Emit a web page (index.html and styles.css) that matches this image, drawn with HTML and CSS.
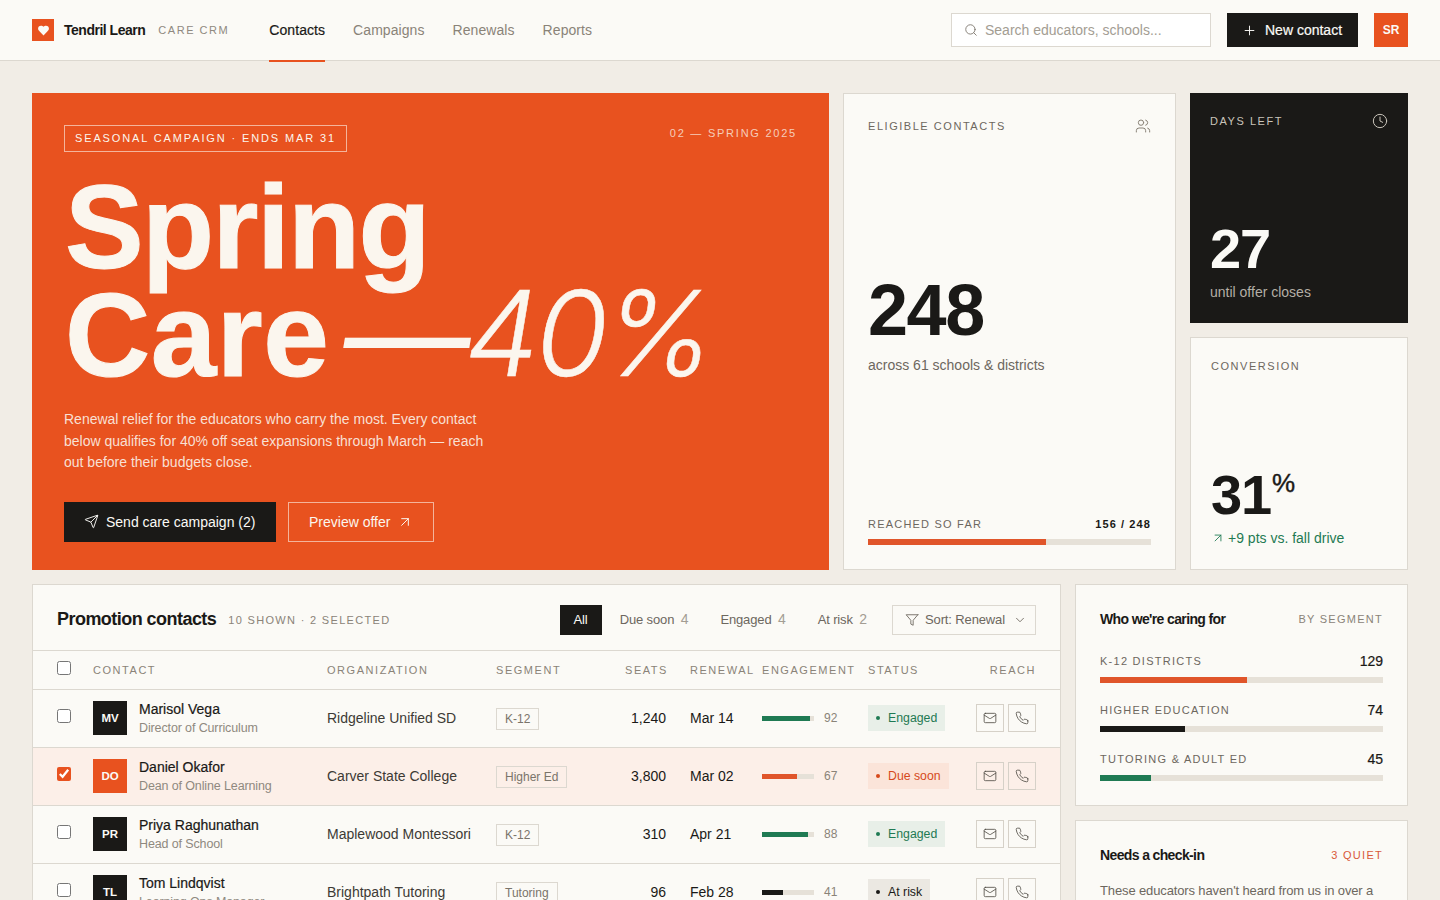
FILE: index.html
```html
<!DOCTYPE html>
<html lang="en">
<head>
  <meta charset="UTF-8" />
  <meta name="viewport" content="width=device-width, initial-scale=1.0"/>
  <title>Tendril Learn - Care CRM</title>
  <link rel="stylesheet" href="styles.css">
</head>
<body>

  <!-- Icon sprite -->
  <svg class="sprite" xmlns="http://www.w3.org/2000/svg">
    <symbol id="i-search" viewBox="0 0 24 24"><circle cx="11" cy="11" r="8"/><path d="m21 21-4.3-4.3"/></symbol>
    <symbol id="i-plus" viewBox="0 0 24 24"><path d="M5 12h14M12 5v14"/></symbol>
    <symbol id="i-send" viewBox="0 0 24 24"><path d="M14.536 21.686a.5.5 0 0 0 .937-.024l6.5-19a.496.496 0 0 0-.635-.635l-19 6.5a.5.5 0 0 0-.024.937l7.93 3.18a2 2 0 0 1 1.112 1.11z"/><path d="m21.854 2.147-10.94 10.939"/></symbol>
    <symbol id="i-arrow" viewBox="0 0 24 24"><path d="M7 7h10v10M7 17 17 7"/></symbol>
    <symbol id="i-users" viewBox="0 0 24 24"><path d="M16 21v-2a4 4 0 0 0-4-4H6a4 4 0 0 0-4 4v2"/><circle cx="9" cy="7" r="4"/><path d="M22 21v-2a4 4 0 0 0-3-3.87"/><path d="M16 3.13a4 4 0 0 1 0 7.75"/></symbol>
    <symbol id="i-clock" viewBox="0 0 24 24"><circle cx="12" cy="12" r="10"/><path d="M12 6v6l4 2"/></symbol>
    <symbol id="i-filter" viewBox="0 0 24 24"><polygon points="22 3 2 3 10 12.46 10 19 14 21 14 12.46 22 3"/></symbol>
    <symbol id="i-chevron" viewBox="0 0 24 24"><path d="m6 9 6 6 6-6"/></symbol>
    <symbol id="i-mail" viewBox="0 0 24 24"><rect x="2" y="4" width="20" height="16" rx="2"/><path d="m22 7-8.97 5.7a1.94 1.94 0 0 1-2.06 0L2 7"/></symbol>
    <symbol id="i-phone" viewBox="0 0 24 24"><path d="M22 16.92v3a2 2 0 0 1-2.18 2 19.79 19.79 0 0 1-8.63-3.07 19.5 19.5 0 0 1-6-6 19.79 19.79 0 0 1-3.07-8.67A2 2 0 0 1 4.11 2h3a2 2 0 0 1 2 1.72 12.84 12.84 0 0 0 .7 2.81 2 2 0 0 1-.45 2.11L8.09 9.91a16 16 0 0 0 6 6l1.27-1.27a2 2 0 0 1 2.11-.45 12.84 12.84 0 0 0 2.81.7A2 2 0 0 1 22 16.92z"/></symbol>
  </svg>

  <!-- Top bar -->
  <header class="topbar">
    <div class="brand">
      <span class="brand-mark">
        <svg viewBox="0 0 24 24"><path d="M19 14c1.49-1.46 3-3.21 3-5.5A5.5 5.5 0 0 0 16.5 3c-1.76 0-3 .5-4.5 2-1.5-1.5-2.74-2-4.5-2A5.5 5.5 0 0 0 2 8.5c0 2.3 1.5 4.05 3 5.5l7 7Z"/></svg>
      </span>
      <span class="brand-name">Tendril Learn</span>
      <span class="brand-tag">Care CRM</span>
    </div>
    <nav class="nav">
      <a class="nav-link active">Contacts</a>
      <a class="nav-link">Campaigns</a>
      <a class="nav-link">Renewals</a>
      <a class="nav-link">Reports</a>
    </nav>
    <div class="top-actions">
      <label class="search">
        <svg class="icon"><use href="#i-search"/></svg>
        <input type="text" placeholder="Search educators, schools...">
      </label>
      <button class="btn btn-dark btn-new"><svg class="icon"><use href="#i-plus"/></svg>New contact</button>
      <span class="user">SR</span>
    </div>
  </header>

  <main class="main">
    <section class="top-grid">

      <!-- Hero -->
      <div class="hero">
        <div class="hero-top">
          <span class="hero-badge">Seasonal campaign · Ends Mar 31</span>
          <span class="hero-issue">02 — Spring 2025</span>
        </div>
        <h1 class="hero-title">Spring<br><span class="care">Care</span><em><span class="dash">—</span>40%</em></h1>
        <p class="hero-copy">Renewal relief for the educators who carry the most. Every contact below qualifies for 40% off seat expansions through March — reach out before their budgets close.</p>
        <div class="hero-actions">
          <button class="btn btn-dark btn-send"><svg class="icon"><use href="#i-send"/></svg>Send care campaign (2)</button>
          <button class="btn btn-line">Preview offer<svg class="icon"><use href="#i-arrow"/></svg></button>
        </div>
      </div>

      <!-- Eligible -->
      <div class="card stat-main">
        <div class="stat-head">
          <span class="label">Eligible contacts</span>
          <svg class="icon"><use href="#i-users"/></svg>
        </div>
        <div class="stat-body">
          <div class="big-num">248</div>
          <div class="stat-sub">across 61 schools &amp; districts</div>
        </div>
        <div>
          <div class="reach-row">
            <span class="label">Reached so far</span>
            <span class="reach-count">156 / 248</span>
          </div>
          <div class="bar"><div class="fill fill-orange" style="width: 63%"></div></div>
        </div>
      </div>

      <div class="stat-col">
        <div class="card-dark stat-small">
          <div class="stat-head">
            <span class="label">Days left</span>
            <svg class="icon"><use href="#i-clock"/></svg>
          </div>
          <div>
            <div class="mid-num">27</div>
            <div class="stat-sub">until offer closes</div>
          </div>
        </div>
        <div class="card stat-small">
          <div class="stat-head">
            <span class="label">Conversion</span>
          </div>
          <div>
            <div class="mid-num">31<sup>%</sup></div>
            <div class="stat-up"><svg class="icon"><use href="#i-arrow"/></svg>+9 pts vs. fall drive</div>
          </div>
        </div>
      </div>
    </section>

    <section class="bottom-grid">

      <!-- Contacts table -->
      <div class="card table-card">
        <div class="table-head">
          <h2>Promotion contacts</h2>
          <span class="label table-count">10 shown · 2 selected</span>
          <div class="filters">
            <button class="filter active">All</button>
            <button class="filter">Due soon <i>4</i></button>
            <button class="filter">Engaged <i>4</i></button>
            <button class="filter">At risk <i>2</i></button>
          </div>
          <button class="sort"><svg class="icon"><use href="#i-filter"/></svg>Sort: Renewal<svg class="icon chev"><use href="#i-chevron"/></svg></button>
        </div>

        <table class="contacts">
          <colgroup>
            <col class="c-check"><col class="c-contact"><col class="c-org"><col class="c-seg"><col class="c-seats"><col class="c-renew"><col class="c-eng"><col class="c-status"><col class="c-reach">
          </colgroup>
          <thead>
            <tr>
              <th><input type="checkbox"></th>
              <th>Contact</th>
              <th>Organization</th>
              <th>Segment</th>
              <th class="right">Seats</th>
              <th>Renewal</th>
              <th>Engagement</th>
              <th>Status</th>
              <th class="right">Reach</th>
            </tr>
          </thead>
          <tbody>
            <tr>
              <td><input type="checkbox"></td>
              <td><div class="person"><span class="avatar">MV</span><div><div class="name">Marisol Vega</div><div class="role">Director of Curriculum</div></div></div></td>
              <td class="org">Ridgeline Unified SD</td>
              <td><span class="chip">K-12</span></td>
              <td class="num">1,240</td>
              <td class="date">Mar 14</td>
              <td><div class="eng"><div class="eng-bar"><div class="fill fill-green" style="width: 92%"></div></div><span>92</span></div></td>
              <td><span class="status engaged">Engaged</span></td>
              <td><div class="reach"><button><svg class="icon"><use href="#i-mail"/></svg></button><button><svg class="icon"><use href="#i-phone"/></svg></button></div></td>
            </tr>
            <tr class="selected">
              <td><input type="checkbox" checked></td>
              <td><div class="person"><span class="avatar orange">DO</span><div><div class="name">Daniel Okafor</div><div class="role">Dean of Online Learning</div></div></div></td>
              <td class="org">Carver State College</td>
              <td><span class="chip">Higher Ed</span></td>
              <td class="num">3,800</td>
              <td class="date">Mar 02</td>
              <td><div class="eng"><div class="eng-bar"><div class="fill fill-orange" style="width: 67%"></div></div><span>67</span></div></td>
              <td><span class="status due">Due soon</span></td>
              <td><div class="reach"><button><svg class="icon"><use href="#i-mail"/></svg></button><button><svg class="icon"><use href="#i-phone"/></svg></button></div></td>
            </tr>
            <tr>
              <td><input type="checkbox"></td>
              <td><div class="person"><span class="avatar">PR</span><div><div class="name">Priya Raghunathan</div><div class="role">Head of School</div></div></div></td>
              <td class="org">Maplewood Montessori</td>
              <td><span class="chip">K-12</span></td>
              <td class="num">310</td>
              <td class="date">Apr 21</td>
              <td><div class="eng"><div class="eng-bar"><div class="fill fill-green" style="width: 88%"></div></div><span>88</span></div></td>
              <td><span class="status engaged">Engaged</span></td>
              <td><div class="reach"><button><svg class="icon"><use href="#i-mail"/></svg></button><button><svg class="icon"><use href="#i-phone"/></svg></button></div></td>
            </tr>
            <tr>
              <td><input type="checkbox"></td>
              <td><div class="person"><span class="avatar">TL</span><div><div class="name">Tom Lindqvist</div><div class="role">Learning Ops Manager</div></div></div></td>
              <td class="org">Brightpath Tutoring</td>
              <td><span class="chip">Tutoring</span></td>
              <td class="num">96</td>
              <td class="date">Feb 28</td>
              <td><div class="eng"><div class="eng-bar"><div class="fill fill-black" style="width: 41%"></div></div><span>41</span></div></td>
              <td><span class="status risk">At risk</span></td>
              <td><div class="reach"><button><svg class="icon"><use href="#i-mail"/></svg></button><button><svg class="icon"><use href="#i-phone"/></svg></button></div></td>
            </tr>
          </tbody>
        </table>
      </div>

      <!-- Sidebar -->
      <aside class="side">
        <div class="card side-card">
          <div class="side-head">
            <h3>Who we're caring for</h3>
            <span class="label">By segment</span>
          </div>
          <div class="seg">
            <div class="seg-row"><span class="label">K-12 districts</span><b>129</b></div>
            <div class="bar"><div class="fill fill-orange" style="width: 52%"></div></div>
          </div>
          <div class="seg">
            <div class="seg-row"><span class="label">Higher education</span><b>74</b></div>
            <div class="bar"><div class="fill fill-black" style="width: 30%"></div></div>
          </div>
          <div class="seg">
            <div class="seg-row"><span class="label">Tutoring &amp; adult ed</span><b>45</b></div>
            <div class="bar"><div class="fill fill-green" style="width: 18%"></div></div>
          </div>
        </div>
        <div class="card side-card">
          <div class="side-head">
            <h3>Needs a check-in</h3>
            <span class="label quiet">3 quiet</span>
          </div>
          <p class="side-copy">These educators haven't heard from us in over a month.</p>
        </div>
      </aside>
    </section>
  </main>

</body>
</html>
```

FILE: styles.css
```css
* {
  box-sizing: border-box;
}

html, body {
  margin: 0;
  height: 100%;
  overflow: hidden;
}

body {
  font-family: "Liberation Sans", Arial, sans-serif;
  font-size: 14px;
  color: #1a1917;
  background: #f1ede6;
}

button, input {
  font-family: inherit;
}

.sprite {
  display: none;
}

.icon {
  width: 14px;
  height: 14px;
  fill: none;
  stroke: currentColor;
  stroke-width: 1.5;
  stroke-linecap: round;
  stroke-linejoin: round;
  flex: none;
}

/* Top bar */
.topbar {
  display: flex;
  align-items: center;
  height: 61px;
  padding: 0 32px;
  background: #fbfaf6;
  border-bottom: 1px solid #dcd8d0;
}

.brand {
  display: flex;
  align-items: center;
}

.brand-mark {
  width: 22px;
  height: 22px;
  background: #e8521f;
  display: flex;
  align-items: center;
  justify-content: center;
  margin-right: 10px;
}

.brand-mark svg {
  width: 13px;
  height: 13px;
  fill: #fbfaf6;
}

.brand-name {
  font-weight: 700;
  letter-spacing: -0.035em;
}

.brand-tag {
  margin-left: 13px;
  font-size: 11px;
  letter-spacing: 0.14em;
  text-transform: uppercase;
  color: #8f897f;
}

.nav {
  display: flex;
  gap: 28px;
  margin-left: 40px;
  height: 61px;
}

.nav-link {
  display: flex;
  align-items: center;
  height: 62px;
  letter-spacing: 0.005em;
  color: #8a8378;
  border-bottom: 2px solid transparent;
}

.nav-link.active {
  color: #1a1917;
  border-bottom-color: #e8521f;
  -webkit-text-stroke: 0.2px #1a1917;
}

.top-actions {
  display: flex;
  align-items: center;
  gap: 16px;
  margin-left: auto;
}

.search {
  display: flex;
  align-items: center;
  gap: 7px;
  width: 260px;
  height: 34px;
  padding: 0 12px;
  background: #fff;
  border: 1px solid #dcd8d0;
  color: #7a746a;
}

.search input {
  flex: 1;
  min-width: 0;
  border: none;
  outline: none;
  padding: 0;
  background: none;
  font-size: 14px;
}

.search input::placeholder {
  color: #a39d93;
  opacity: 1;
}

.btn {
  display: flex;
  align-items: center;
  font-size: 14px;
  border: none;
  cursor: pointer;
}

.btn-dark {
  background: #1a1917;
  color: #fbfaf6;
}

.btn-new {
  width: 131px;
  height: 34px;
  padding: 0 0 0 15px;
  gap: 8px;
  -webkit-text-stroke: 0.2px #fbfaf6;
}

.btn-new .icon {
  width: 15px;
  height: 15px;
}

.user {
  width: 34px;
  height: 34px;
  display: flex;
  align-items: center;
  justify-content: center;
  background: #e8521f;
  color: #fbfaf6;
  font-size: 12px;
  font-weight: 700;
}

/* Layout */
.main {
  padding: 32px;
}

.top-grid {
  display: grid;
  grid-template-columns: 1fr 333px 218px;
  gap: 14px;
  height: 477px;
}

.bottom-grid {
  display: grid;
  grid-template-columns: 1fr 333px;
  gap: 14px;
  margin-top: 14px;
  align-items: start;
}

.card {
  background: #fbfaf6;
  border: 1px solid #dcd8d0;
}

.card-dark {
  background: #1a1917;
  color: #fbfaf6;
}

.label {
  font-size: 11px;
  letter-spacing: 0.14em;
  text-transform: uppercase;
  color: #6d675e;
}

/* Hero */
.hero {
  display: flex;
  flex-direction: column;
  padding: 32px 32px 28px;
  background: #e8521f;
  color: #fbf6ee;
}

.hero-top {
  display: flex;
  justify-content: space-between;
  align-items: flex-start;
}

.hero-badge {
  padding: 6px 10px;
  height: 27px;
  border: 1px solid rgba(251, 246, 238, 0.6);
  font-size: 11px;
  letter-spacing: 0.17em;
  text-transform: uppercase;
}

.hero-issue {
  font-size: 11px;
  letter-spacing: 0.16em;
  text-transform: uppercase;
  color: rgba(251, 246, 238, 0.75);
  margin-top: 2px;
}

.hero-title {
  margin: 22px 0 0 1px;
  font-size: 118px;
  line-height: 106px;
  font-weight: 700;
  letter-spacing: -0.0135em;
  white-space: nowrap;
  -webkit-text-stroke: 1px #fbf6ee;
}

.care {
  letter-spacing: 0.004em;
}

.hero-title em {
  margin-left: 14px;
  font-family: Inter, sans-serif;
  font-weight: 300;
  font-style: italic;
  letter-spacing: -0.035em;
  -webkit-text-stroke: 0.5px #fbf6ee;
}

.dash {
  font-size: 126px;
  line-height: 0;
  font-weight: 400;
  vertical-align: -6px;
  -webkit-text-stroke: 0;
}

.hero-copy {
  margin: 21px 0 0;
  max-width: 430px;
  font-size: 14px;
  line-height: 21.5px;
  color: rgba(251, 246, 238, 0.88);
}

.hero-actions {
  display: flex;
  gap: 12px;
  margin-top: auto;
}

.btn-send {
  height: 40px;
  width: 212px;
  padding: 0 0 1px 20px;
  gap: 7px;
}

.btn-send .icon {
  width: 15px;
  height: 15px;
}

.btn-line {
  height: 40px;
  width: 146px;
  padding: 0 0 1px 20px;
  gap: 7px;
  background: none;
  color: #fbf6ee;
  border: 1px solid rgba(251, 246, 238, 0.6);
}

.btn-line .icon {
  width: 16px;
  height: 16px;
}

/* Stat cards */
.stat-main {
  display: flex;
  flex-direction: column;
  justify-content: space-between;
  padding: 24px;
}

.stat-head {
  display: flex;
  justify-content: space-between;
  align-items: center;
  color: #8a8378;
  height: 16px;
}

.stat-head .icon {
  width: 16px;
  height: 16px;
}

.stat-body {
  margin-bottom: 6px;
}

.big-num {
  font-size: 72px;
  line-height: 1;
  font-weight: 700;
  letter-spacing: -0.02em;
}

.stat-sub {
  margin-top: 11px;
  color: #6d675e;
}

.reach-row {
  display: flex;
  justify-content: space-between;
  align-items: center;
  margin-bottom: 9px;
}

.reach-row .label {
  letter-spacing: 0.11em;
}

.reach-count {
  font-size: 11px;
  letter-spacing: 0.1em;
  font-weight: 700;
}

.bar {
  height: 6px;
  background: #e6e1d8;
}

.fill {
  height: 100%;
}

.fill-orange { background: #e0552a; }
.fill-black { background: #1a1917; }
.fill-green { background: #1f7a53; }

.stat-col {
  display: grid;
  grid-template-rows: 230px 1fr;
  gap: 14px;
}

.stat-small {
  display: flex;
  flex-direction: column;
  justify-content: space-between;
  padding: 20px 20px 23px;
}

.stat-small .stat-sub {
  margin-top: 7px;
}

.card-dark .label,
.card-dark .stat-head {
  color: #c9c4ba;
}

.card-dark .stat-sub {
  color: #b4afa6;
}

.mid-num {
  font-size: 56px;
  line-height: 1;
  font-weight: 700;
  letter-spacing: -0.02em;
}

.mid-num sup {
  font-size: 26px;
  font-weight: 400;
  line-height: 0;
  margin-left: 1px;
  letter-spacing: 0;
  vertical-align: 22px;
  -webkit-text-stroke: 0.4px #1a1917;
}

.stat-up {
  display: flex;
  align-items: center;
  gap: 3px;
  margin-top: 7px;
  color: #1f7a53;
}

/* Contacts table */
.table-card {
  overflow: hidden;
}

.table-head {
  display: flex;
  align-items: center;
  height: 66px;
  padding: 5px 24px 0;
  border-bottom: 1px solid #dcd8d0;
}

.table-head h2 {
  margin: -2px 0 0;
  font-size: 18px;
  font-weight: 700;
  letter-spacing: -0.03em;
}

.table-count {
  margin-left: 12px;
  letter-spacing: 0.12em;
  color: #8a8378;
}

.filters {
  display: flex;
  gap: 4px;
  margin-left: auto;
  margin-right: 11px;
}

.filter {
  height: 30px;
  padding: 0 14px 2px;
  font-size: 13px;
  letter-spacing: -0.01em;
  color: #6d675e;
  background: none;
  border: none;
  cursor: pointer;
}

.filter i {
  font-style: normal;
  font-size: 14px;
  color: #a39d93;
  margin-left: 3px;
}

.filter.active {
  background: #1a1917;
  color: #fbfaf6;
}

.sort {
  display: flex;
  align-items: center;
  gap: 6px;
  width: 144px;
  height: 30px;
  padding: 0 0 1px 12px;
  font-size: 13px;
  letter-spacing: -0.01em;
  color: #6d675e;
  background: none;
  border: 1px solid #dcd8d0;
  cursor: pointer;
}

.sort .chev {
  margin-left: 2px;
}

.contacts {
  width: 100%;
  table-layout: fixed;
  border-collapse: collapse;
}

.c-check { width: 48px; }
.c-contact { width: 234px; }
.c-org { width: 169px; }
.c-seg { width: 129px; }
.c-seats { width: 65px; }
.c-renew { width: 72px; }
.c-eng { width: 106px; }
.c-status { width: 108px; }
.c-reach { width: 96px; }

.contacts th {
  height: 38px;
  padding: 0 12px;
  font-size: 11px;
  font-weight: 400;
  letter-spacing: 0.14em;
  text-transform: uppercase;
  text-align: left;
  white-space: nowrap;
  color: #8a8378;
  border-bottom: 1px solid #dcd8d0;
}

.contacts td {
  height: 58px;
  padding: 0 12px;
  border-bottom: 1px solid #dcd8d0;
  white-space: nowrap;
}

.contacts th:first-child,
.contacts td:first-child {
  padding: 0 0 0 24px;
}

.contacts th:last-child,
.contacts td:last-child {
  padding-right: 24px;
}

.contacts input {
  display: block;
  width: 14px;
  height: 14px;
  margin: -4px 0 0;
  accent-color: #e8521f;
}

.contacts .right,
.contacts .num {
  text-align: right;
}

.selected td {
  background: #fcefe8;
}

.person {
  display: flex;
  align-items: center;
  gap: 12px;
}

.avatar {
  width: 34px;
  height: 34px;
  flex: none;
  display: flex;
  align-items: center;
  justify-content: center;
  background: #1a1917;
  color: #fbfaf6;
  font-size: 11.5px;
  font-weight: 700;
}

.avatar.orange {
  background: #e8521f;
}

.name {
  -webkit-text-stroke: 0.2px #1a1917;
}

.role {
  margin-top: 4px;
  font-size: 12.5px;
  letter-spacing: -0.01em;
  color: #8f897f;
}

.org {
  color: #3d3a35;
}

.chip {
  display: inline-block;
  height: 22px;
  margin-top: 2px;
  padding: 0 8px;
  line-height: 21px;
  font-size: 12px;
  color: #7a746a;
  border: 1px solid #dcd8d0;
}

.eng {
  display: flex;
  align-items: center;
  gap: 10px;
  font-size: 12px;
  color: #8a8378;
}

.eng-bar {
  width: 52px;
  height: 5px;
  background: #e6e1d8;
}

.status {
  display: inline-flex;
  align-items: center;
  gap: 8px;
  height: 26px;
  padding: 0 8px;
  font-size: 12.3px;
}

.status::before {
  content: "";
  width: 4px;
  height: 4px;
  border-radius: 50%;
  background: currentColor;
}

.status.engaged {
  background: #e8efe8;
  color: #1f7a53;
}

.status.due {
  background: #fbe4d9;
  color: #d64a1c;
}

.status.risk {
  background: #ebe8e2;
  color: #1a1917;
}

.reach {
  display: flex;
  justify-content: flex-end;
  gap: 4px;
}

.reach button {
  width: 28px;
  height: 28px;
  padding: 0;
  display: flex;
  align-items: center;
  justify-content: center;
  background: none;
  border: 1px solid #d6d1c8;
  color: #4f4b44;
  cursor: pointer;
}

.reach .icon {
  stroke-width: 1.4;
}

/* Sidebar */
.side {
  display: flex;
  flex-direction: column;
  gap: 14px;
}

.side-card {
  padding: 26px 24px 24px;
}

.side-head {
  display: flex;
  justify-content: space-between;
  align-items: center;
}

.side-head h3 {
  margin: 0;
  font-size: 14px;
  font-weight: 700;
  letter-spacing: -0.045em;
}

.side .label {
  letter-spacing: 0.115em;
}

.side-head .label {
  color: #8a8378;
}

.side-head .quiet {
  color: #d9593a;
}

.side-head + .seg {
  margin-top: 26px;
}

.seg {
  margin-bottom: 19px;
}

.seg:last-child {
  margin-bottom: 0;
}

.seg-row {
  display: flex;
  justify-content: space-between;
  align-items: center;
  margin-bottom: 8px;
  height: 16px;
}

.seg-row b {
  font-weight: 400;
  -webkit-text-stroke: 0.2px #1a1917;
}

.side-copy {
  margin: 18px 0 0;
  font-size: 13px;
  line-height: 20px;
  letter-spacing: -0.01em;
  color: #6d675e;
}
```
